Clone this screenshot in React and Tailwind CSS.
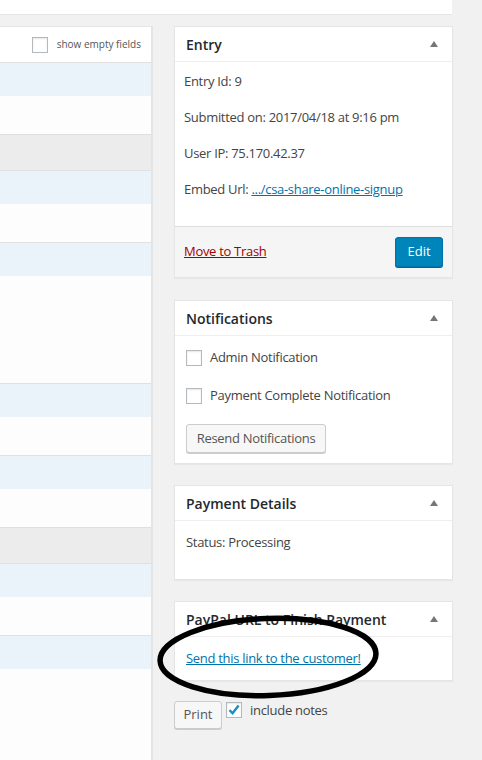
const rows = [
  { kind: 'label', h: 'h-[34px]' },
  { kind: 'value', h: 'h-[38px]' },
  { kind: 'section', h: 'h-[36px]' },
  { kind: 'label', h: 'h-[34px]' },
  { kind: 'value', h: 'h-[38px]' },
  { kind: 'label', h: 'h-[34px]' },
  { kind: 'value', h: 'h-[107px]' },
  { kind: 'label', h: 'h-[34px]' },
  { kind: 'value', h: 'h-[38px]' },
  { kind: 'label', h: 'h-[34px]' },
  { kind: 'value', h: 'h-[38px]' },
  { kind: 'section', h: 'h-[36px]' },
  { kind: 'label', h: 'h-[34px]' },
  { kind: 'value', h: 'h-[38px]' },
  { kind: 'label', h: 'h-[34px]' },
  { kind: 'value', h: 'h-[91px]' },
]

function Arrow() {
  return (
    <svg width="8" height="6" viewBox="0 0 8 6" className="mr-[14px]">
      <path d="M4 0 L8 6 L0 6 Z" fill="#72777c" />
    </svg>
  )
}

function Box({ title, children, className = '' }) {
  return (
    <div className={`bg-white border border-[#e5e5e5] shadow-[0_1px_1px_rgba(0,0,0,0.04)] ${className}`}>
      <div className="h-[35px] flex items-center justify-between border-b border-[#eeeeee] pl-[11px]">
        <span className="text-[14px] font-semibold text-[#23282d]">{title}</span>
        <Arrow />
      </div>
      {children}
    </div>
  )
}

function Checkbox({ checked = false }) {
  return (
    <span className="w-[16px] h-[16px] shrink-0 bg-white border border-[#b4b9be] shadow-[inset_0_1px_2px_rgba(0,0,0,0.1)] flex items-center justify-center">
      {checked && (
        <svg width="14" height="14" viewBox="0 0 14 14">
          <path d="M2.5 7.2 L5.6 10.3 L11.6 2.6" fill="none" stroke="#1e8cbe" strokeWidth="2.4" />
        </svg>
      )}
    </span>
  )
}

function Button({ children, className = '' }) {
  return (
    <button className={`bg-[#f7f7f7] border border-[#cccccc] rounded-[3px] shadow-[0_1px_0_#cccccc] text-[13px] text-[#555555] ${className}`}>
      {children}
    </button>
  )
}

export default function App() {
  return (
    <div className="w-[482px] h-[760px] bg-[#f1f1f1] relative overflow-hidden text-[#444444] font-['Open_Sans',sans-serif] text-[13px]">
      <div className="w-[452px] h-[15px] bg-white border-b border-[#e5e5e5]"></div>

      <div className="flex mt-[11px]">
        {/* entry table */}
        <div className="w-[153px] h-[734px] shrink-0 bg-white border-t border-[#e5e5e5] border-r-2 border-r-[#e4e4e4] flex flex-col">
          <div className="h-[35px] flex items-center justify-end pr-[10px] gap-[9px]">
            <Checkbox />
            <span className="text-[10px] text-[#555555]">show empty fields</span>
          </div>
          {rows.map((r, i) => (
            <div
              key={i}
              className={`${r.h} shrink-0 ${
                r.kind === 'label'
                  ? 'bg-[#eaf2fa] border-t border-[#e1e1e1]'
                  : r.kind === 'section'
                  ? 'bg-[#ececec] border-t border-[#dfdfdf]'
                  : 'bg-[#fdfdfd]'
              }`}
            ></div>
          ))}
        </div>

        {/* sidebar */}
        <div className="ml-[21px] w-[279px] flex flex-col">
          <Box title="Entry">
            <div className="pt-[2px] pb-[18px] pl-[9px] tracking-[-0.3px]">
              <div className="h-[36px] flex items-center">Entry Id: 9</div>
              <div className="h-[36px] flex items-center">Submitted on: 2017/04/18 at 9:16 pm</div>
              <div className="h-[36px] flex items-center">User IP: 75.170.42.37</div>
              <div className="h-[36px] flex items-center">
                Embed Url:&nbsp;<a href="#" className="text-[#0073aa] underline">.../csa-share-online-signup</a>
              </div>
            </div>
            <div className="h-[51px] bg-[#f5f5f5] border-t border-[#dddddd] flex items-center justify-between pl-[9px] pr-[9px]">
              <a href="#" className="text-[#a00000] underline tracking-[-0.3px]">Move to Trash</a>
              <button className="w-[48px] h-[30px] rounded-[3px] bg-[#0085ba] border border-[#0073aa] shadow-[0_1px_0_#006799] text-white text-[13px]">
                Edit
              </button>
            </div>
          </Box>

          <Box title="Notifications" className="mt-[22px]">
            <div className="pl-[11px] pt-[14px] pb-[10px] tracking-[-0.3px]">
              <label className="flex items-center gap-[8px] h-[16px]">
                <Checkbox />
                <span>Admin Notification</span>
              </label>
              <label className="flex items-center gap-[8px] h-[16px] mt-[22px]">
                <Checkbox />
                <span>Payment Complete Notification</span>
              </label>
              <Button className="mt-[20px] w-[140px] h-[29px] tracking-[-0.3px]">Resend Notifications</Button>
            </div>
          </Box>

          <Box title="Payment Details" className="mt-[21px]">
            <div className="pl-[11px] pt-[12px] h-[58px] tracking-[-0.3px]">Status: Processing</div>
          </Box>

          <Box title="PayPal URL to Finish Payment" className="mt-[21px]">
            <div className="pl-[11px] h-[43px] flex items-center tracking-[-0.3px]">
              <a href="#" className="text-[#0073aa] underline">Send this link to the customer!</a>
            </div>
          </Box>

          <div className="mt-[20px] flex items-start">
            <Button className="w-[48px] h-[28px]">Print</Button>
            <span className="ml-[4px] mt-[1px]">
              <Checkbox checked />
            </span>
            <span className="ml-[8px] text-[#444444] tracking-[-0.3px] leading-[16px] mt-[1px]">include notes</span>
          </div>
        </div>
      </div>

      {/* hand-drawn annotation */}
      <svg className="absolute left-[152px] top-[610px]" width="235" height="96" viewBox="0 0 235 96">
        <ellipse cx="116" cy="47" rx="108" ry="38.5" fill="none" stroke="#000000" strokeWidth="5.5" transform="rotate(-2 116 47)" />
      </svg>
    </div>
  )
}
